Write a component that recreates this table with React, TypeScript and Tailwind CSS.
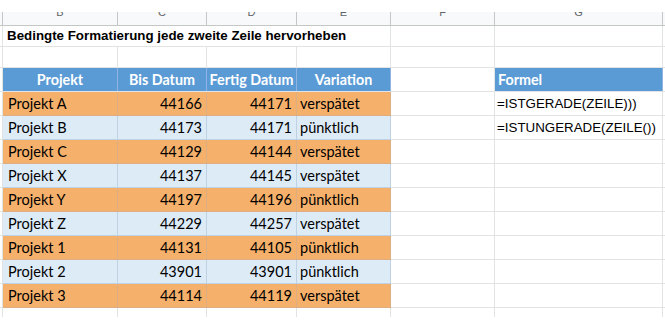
import React from "react";

const COLS = "grid grid-cols-[3px_115px_89px_90px_94px_104px_168px_1fr]";
const GRID = "border-[#e2e3e3]";

type Row = { p: string; b: number; f: number; v: string; g?: string };
const rows: Row[] = [
  { p: "Projekt A", b: 44166, f: 44171, v: "verspätet", g: "=ISTGERADE(ZEILE)))" },
  { p: "Projekt B", b: 44173, f: 44171, v: "pünktlich", g: "=ISTUNGERADE(ZEILE())" },
  { p: "Projekt C", b: 44129, f: 44144, v: "verspätet" },
  { p: "Projekt X", b: 44137, f: 44145, v: "verspätet" },
  { p: "Projekt Y", b: 44197, f: 44196, v: "pünktlich" },
  { p: "Projekt Z", b: 44229, f: 44257, v: "verspätet" },
  { p: "Projekt 1", b: 44131, f: 44105, v: "pünktlich" },
  { p: "Projekt 2", b: 43901, f: 43901, v: "pünktlich" },
  { p: "Projekt 3", b: 44114, f: 44119, v: "verspätet" },
];

const tableFont = { fontFamily: "Lato, 'Open Sans', sans-serif" } as const;
const arial = { fontFamily: "'Liberation Sans', Arial, sans-serif" } as const;

export default function App() {
  return (
    <div className="w-[665px] h-[327px] bg-white overflow-hidden relative" style={arial}>
      <div className="h-[12px] bg-white" />
      {/* column header */}
      <div className={`${COLS} h-[14px] bg-[#f8f9fa] border-b border-[#c4c7c5] overflow-hidden text-[11px] text-[#5f6368]`}>
        <div className="border-r border-[#c4c7c5]" />
        {["B", "C", "D", "E", "F", "G"].map((c) => (
          <div key={c} className="border-r border-[#c4c7c5] overflow-hidden">
            <div className="text-center leading-[11px] -mt-[5px]">{c}</div>
          </div>
        ))}
        <div />
      </div>
      {/* title row */}
      <div className={`${COLS} h-[21px] border-b ${GRID}`}>
        <div className={`border-r ${GRID}`} />
        <div className="col-span-4 border-r border-[#e2e3e3] flex items-end pb-[3px] pl-[4px] text-[13.33px] font-bold text-black whitespace-nowrap">
          Bedingte Formatierung jede zweite Zeile hervorheben
        </div>
        <div className={`border-r ${GRID}`} />
        <div className={`border-r ${GRID}`} />
        <div />
      </div>
      {/* empty row */}
      <div className={`${COLS} h-[21px] border-b ${GRID}`}>
        <div className={`border-r ${GRID}`} />
        {[0, 1, 2, 3, 4, 5].map((i) => (
          <div key={i} className={`border-r ${GRID}`} />
        ))}
        <div />
      </div>
      {/* table header */}
      <div className={`${COLS} h-[24px] border-b ${GRID}`} style={tableFont}>
        <div className={`border-r ${GRID}`} />
        {["Projekt", "Bis Datum", "Fertig Datum", "Variation"].map((h) => (
          <div
            key={h}
            className="bg-[#5b9bd5] border-r border-[#8db4e2] flex items-center justify-center pt-[1px] text-[14.3px] font-bold text-white whitespace-nowrap"
          >
            {h}
          </div>
        ))}
        <div className={`border-r ${GRID}`} />
        <div className="bg-[#5b9bd5] border-r border-[#8db4e2] flex items-center pl-[3px] pt-[1px] text-[14.3px] font-bold text-white">
          Formel
        </div>
        <div />
      </div>
      {/* data rows */}
      {rows.map((r, i) => {
        const odd = i % 2 === 0;
        const bg = odd ? "bg-[#f5b16b] border-[#dcae82]" : "bg-[#ddebf7] border-[#bfd2e4]";
        return (
          <div key={r.p} className={`${COLS} h-[24px]`}>
            <div className={`border-r border-b ${GRID}`} />
            <div className={`${bg} border-r border-b flex items-center pl-[5px] pt-[1px] text-[14.5px] text-black`} style={tableFont}>
              {r.p}
            </div>
            <div className={`${bg} border-r border-b flex items-center justify-end pr-[4px] pt-[1px] text-[14.5px] text-black`} style={tableFont}>
              {r.b}
            </div>
            <div className={`${bg} border-r border-b flex items-center justify-end pr-[4px] pt-[1px] text-[14.5px] text-black`} style={tableFont}>
              {r.f}
            </div>
            <div className={`${bg} border-r border-b flex items-center pl-[3px] pt-[1px] text-[14.5px] text-black`} style={tableFont}>
              {r.v}
            </div>
            <div className={`border-r border-b ${GRID}`} />
            <div className={`border-r border-b ${GRID} flex items-center pl-[2px] pt-[1px] text-[13.33px] text-black whitespace-nowrap`}>
              {r.g ?? ""}
            </div>
            <div className={`border-b ${GRID}`} />
          </div>
        );
      })}
      {/* partial row */}
      <div className={`${COLS} h-[9px]`}>
        <div className={`border-r ${GRID}`} />
        {[0, 1, 2, 3, 4, 5].map((i) => (
          <div key={i} className={`border-r ${GRID}`} />
        ))}
        <div />
      </div>
    </div>
  );
}
